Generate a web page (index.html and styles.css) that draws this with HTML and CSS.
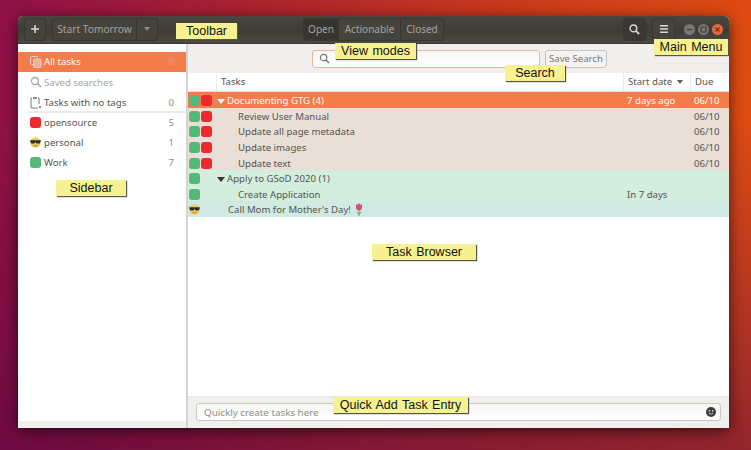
FILE: index.html
```html
<!DOCTYPE html>
<html lang="en">
    <head>
        <meta name="viewport" content="width=device-width">
        <title>Getting Things GNOME</title>
        <link rel="stylesheet" href="styles.css">
    </head>
    <body>
        <div class="window">
            <div class="titlebar">
                <button class="tool tool-add"><svg width="8" height="8" viewBox="0 0 9 9"><path d="M3.600 0h1.800v3.600H9v1.800H5.400V9H3.600V5.400H0V3.600h3.600z" fill="#d8d6d0"/></svg></button>
                <div class="group group-start">
                    <button class="tool tool-start">Start Tomorrow</button>
                    <button class="tool tool-drop"><span class="caret caret-dim"></span></button>
                </div>
                <div class="group group-modes">
                    <button class="tool mode mode-open active">Open</button>
                    <button class="tool mode mode-actionable">Actionable</button>
                    <button class="tool mode mode-closed">Closed</button>
                </div>
                <button class="tool tool-search">
                    <svg width="11" height="11" viewBox="0 0 12 12"><circle cx="4.800" cy="4.800" r="3.600" fill="none" stroke="#d8d6d0" stroke-width="1.600"/><path d="M7.500 7.500l3.600 3.600" stroke="#d8d6d0" stroke-width="2"/></svg>
                </button>
                <button class="tool tool-menu">
                    <svg width="8" height="8" viewBox="0 0 8 8"><path d="M0 0h8v1.600H0zM0 3.200h8v1.600H0zM0 6.400h8V8H0z" fill="#d8d6d0"/></svg>
                </button>
                <div class="wm">
                    <span class="wm-btn"><svg width="11" height="11" viewBox="0 0 11 11"><path d="M3 5h5v1.200H3z" fill="#3b3a35"/></svg></span>
                    <span class="wm-btn"><svg width="11" height="11" viewBox="0 0 11 11"><path d="M3 3h5v5H3z" fill="none" stroke="#3b3a35"/></svg></span>
                    <span class="wm-btn wm-close"><svg width="11" height="11" viewBox="0 0 11 11"><path d="M3.500 3.500l4 4M7.500 3.500l-4 4" stroke="#7a2c12" stroke-width="1.200"/></svg></span>
                </div>
            </div>

            <div class="content">
                <div class="sidebar">
                    <div class="side-list">
                        <div class="side-row selected">
                            <svg class="side-icon" width="12" height="12" viewBox="0 0 12 12"><rect x="0.500" y="0.500" width="7" height="8" rx="1" fill="none" stroke="#d9d5cf"/><rect x="3.500" y="3" width="7.500" height="8.500" rx="1" fill="#e9b49b" stroke="#d9d5cf"/></svg>
                            <span class="side-name">All tasks</span><span class="side-count">8</span>
                        </div>
                        <div class="side-row dim">
                            <svg class="side-icon" width="12" height="12" viewBox="0 0 12 12"><circle cx="5" cy="5" r="3.500" fill="none" stroke="#a5a5a5" stroke-width="1.300"/><path d="M7.600 7.600l3.400 3.400" stroke="#a5a5a5" stroke-width="1.600"/></svg>
                            <span class="side-name">Saved searches</span>
                        </div>
                        <div class="side-row">
                            <svg class="side-icon" width="12" height="13" viewBox="0 0 12 13"><path d="M2 2H1v10h7M8 2h1v6" fill="none" stroke="#777"/><path d="M3 1h4v2H3z" fill="#888"/><path d="M9 10l2 2M11 10l-2 2" stroke="#888"/></svg>
                            <span class="side-name">Tasks with no tags</span><span class="side-count">0</span>
                        </div>
                        <div class="side-sep"></div>
                        <div class="side-row">
                            <span class="tag tag-red"></span>
                            <span class="side-name">opensource</span><span class="side-count">5</span>
                        </div>
                        <div class="side-row">
                            <svg class="tag-emoji" width="11" height="11" viewBox="0 0 11 11"><circle cx="5.500" cy="5.500" r="5.300" fill="#f2cd5c"/><path d="M0.300 3.200h10.400v1.300l-1 2H6.500L5.500 4.800 4.500 6.500H1.300l-1-2z" fill="#2d2d2d"/><path d="M3.500 8.400q2 1 4 0" fill="none" stroke="#8a6a20" stroke-width=".7"/></svg>
                            <span class="side-name">personal</span><span class="side-count">1</span>
                        </div>
                        <div class="side-row">
                            <span class="tag tag-green"></span>
                            <span class="side-name">Work</span><span class="side-count">7</span>
                        </div>
                    </div>
                    <div class="side-foot"></div>
                </div>

                <div class="main">
                    <div class="searchbar">
                        <div class="search-entry">
                            <svg width="11" height="11" viewBox="0 0 12 12"><circle cx="5" cy="5" r="3.500" fill="none" stroke="#777" stroke-width="1.300"/><path d="M7.600 7.600l3.400 3.400" stroke="#777" stroke-width="1.600"/></svg>
                        </div>
                        <button class="save-search">Save Search</button>
                    </div>

                    <div class="head">
                        <div class="head-cell"></div>
                        <div class="head-cell">Tasks</div>
                        <div class="head-cell">Start date <span class="caret caret-head"></span></div>
                        <div class="head-cell">Due</div>
                    </div>

                    <div class="rows">
                        <div class="task task-orange">
                            <div class="tags"><span class="tag tag-green"></span><span class="tag tag-red"></span></div>
                            <div class="title"><span class="caret caret-white"></span>Documenting GTG (4)</div>
                            <div>7 days ago</div>
                            <div>06/10</div>
                        </div>
                        <div class="task task-tan">
                            <div class="tags"><span class="tag tag-green"></span><span class="tag tag-red"></span></div>
                            <div class="title child">Review User Manual</div>
                            <div></div>
                            <div>06/10</div>
                        </div>
                        <div class="task task-tan">
                            <div class="tags"><span class="tag tag-green"></span><span class="tag tag-red"></span></div>
                            <div class="title child">Update all page metadata</div>
                            <div></div>
                            <div>06/10</div>
                        </div>
                        <div class="task task-tan">
                            <div class="tags"><span class="tag tag-green"></span><span class="tag tag-red"></span></div>
                            <div class="title child">Update images</div>
                            <div></div>
                            <div>06/10</div>
                        </div>
                        <div class="task task-tan">
                            <div class="tags"><span class="tag tag-green"></span><span class="tag tag-red"></span></div>
                            <div class="title child">Update text</div>
                            <div></div>
                            <div>06/10</div>
                        </div>
                        <div class="task task-green">
                            <div class="tags"><span class="tag tag-green"></span></div>
                            <div class="title"><span class="caret caret-dark"></span>Apply to GSoD 2020 (1)</div>
                            <div></div>
                            <div></div>
                        </div>
                        <div class="task task-green">
                            <div class="tags"><span class="tag tag-green"></span></div>
                            <div class="title child">Create Application</div>
                            <div>In 7 days</div>
                            <div></div>
                        </div>
                        <div class="task task-teal">
                            <div class="tags">
                                <svg class="tag-emoji" width="11" height="11" viewBox="0 0 11 11"><circle cx="5.500" cy="5.500" r="5.300" fill="#f2cd5c"/><path d="M0.300 3.200h10.400v1.300l-1 2H6.500L5.500 4.800 4.500 6.500H1.300l-1-2z" fill="#2d2d2d"/><path d="M3.500 8.400q2 1 4 0" fill="none" stroke="#8a6a20" stroke-width=".7"/></svg>
                            </div>
                            <div class="title top">Call Mom for Mother's Day!
                                <svg class="rose" width="8" height="13" viewBox="0 0 8 13"><path d="M1 1l1.500 1L4 0l1.500 2L7 1v3.500C7 6.500 5.500 7.500 4 7.500S1 6.500 1 4.500z" fill="#d04f78"/><path d="M4 7v6M4 11L1.500 9M4 11l2.500-2" stroke="#6a9a5a" fill="none"/></svg>
                            </div>
                            <div></div>
                            <div></div>
                        </div>
                    </div>

                    <div class="quick">
                        <div class="quick-entry">
                            <span class="quick-hint">Quickly create tasks here</span>
                            <svg width="10" height="10" viewBox="0 0 10 10"><circle cx="5" cy="5" r="5" fill="#3c3c3c"/><circle cx="3.300" cy="3.800" r=".9" fill="#ddd"/><circle cx="6.700" cy="3.800" r=".9" fill="#ddd"/><path d="M2.800 6.300q2.200 1.600 4.400 0" fill="none" stroke="#ddd" stroke-width=".8"/></svg>
                        </div>
                    </div>
                </div>
            </div>
        </div>

        <!-- annotations on top of the screenshot -->
        <div class="note note-toolbar">Toolbar</div>
        <div class="note note-modes">View modes</div>
        <div class="note note-menu">Main Menu</div>
        <div class="note note-search">Search</div>
        <div class="note note-sidebar">Sidebar</div>
        <div class="note note-browser">Task Browser</div>
        <div class="note note-quick">Quick Add Task Entry</div>
    </body>
</html>
```

FILE: styles.css
```css
* {
    margin: 0;
    padding: 0;
    box-sizing: border-box;
}

html, body {
    height: 100%;
    overflow: hidden;
}

body {
    position: relative;
    padding: 16px 22px 22px 18px;
    font-family: "Noto Sans", sans-serif;
    font-size: 9.6px;
    color: #555550;
    background:
        linear-gradient(to bottom, transparent 25%, rgba(80, 0, 70, 0.55) 100%),
        linear-gradient(100deg, #8e1048 0%, #a8222f 30%, #c93a1c 62%, #e4500f 100%);
}

button {
    font: inherit;
    color: inherit;
    background: none;
    border: 0;
}

.window {
    display: flex;
    flex-direction: column;
    height: 412px;
    border-radius: 5px 5px 0 0;
    overflow: hidden;
    background: #fff;
    box-shadow: 0 3px 14px rgba(0, 0, 0, 0.65);
}

/* title bar */
.titlebar {
    display: flex;
    align-items: center;
    flex: 0 0 28px;
    padding: 0 6px 1px 6px;
    color: #a5a299;
    background: linear-gradient(#48463f, #3e3c37 55%, #4b4943);
    border-bottom: 1px solid #3a3833;
}

.tool {
    display: flex;
    align-items: center;
    justify-content: center;
    height: 23px;
    border: 1px solid #393732;
    border-radius: 3px;
    background: #45433d;
}

.tool-add {
    width: 22px;
    margin-right: 6px;
}

.group {
    display: flex;
}

.group .tool {
    border-radius: 0;
    margin-left: -1px;
}

.group .tool:first-child {
    border-radius: 3px 0 0 3px;
    margin-left: 0;
}

.group .tool:last-child {
    border-radius: 0 3px 3px 0;
}

.tool-start {
    width: 85px;
    font-size: 10.200px;
}

.tool-drop {
    width: 22px;
}

.group-modes {
    margin-left: 145px;
    margin-right: auto;
}

.mode {
    font-size: 10px;
}

.mode-open {
    width: 36px;
}

.mode-actionable {
    width: 63px;
}

.mode-closed {
    width: 44px;
}

.mode.active {
    background: #373530;
}

.tool-search {
    width: 23px;
    margin-right: 6px;
    background: #3a3834;
}

.tool-menu {
    width: 23px;
    margin-right: 9px;
}

.wm {
    display: flex;
    gap: 3px;
}

.wm-btn {
    display: flex;
    width: 11px;
    height: 11px;
    border-radius: 50%;
    background: #79776f;
}

.wm-close {
    background: #e9683a;
}

/* little triangles */
.caret {
    display: inline-block;
    width: 0;
    height: 0;
    border-left: 3.500px solid transparent;
    border-right: 3.500px solid transparent;
    border-top: 4px solid #8c8a82;
}

.caret-head {
    margin-left: 2px;
    vertical-align: 1px;
    border-top-color: #5c5c57;
}

.caret-white,
.caret-dark {
    margin-right: 2px;
    vertical-align: 0;
    border-left-width: 4.500px;
    border-right-width: 4.500px;
    border-top-width: 5px;
}

.caret-white {
    border-top-color: #fff;
}

.caret-dark {
    border-top-color: #333;
}

.content {
    display: flex;
    flex: 1;
    min-height: 0;
}

/* sidebar */
.sidebar {
    display: flex;
    flex-direction: column;
    flex: 0 0 170px;
    border-right: 2px solid #d5d3cf;
}

.side-list {
    flex: 1;
    padding-top: 8px;
}

.side-foot {
    flex: 0 0 7px;
    background: #f0efed;
}

.side-row {
    display: flex;
    align-items: center;
    height: 20px;
    padding: 0 12px;
}

.side-icon {
    flex: none;
    margin-right: 2px;
}

.side-row .tag,
.side-row .tag-emoji {
    margin-right: 3px;
}

.side-name {
    flex: 1;
}

.side-count {
    color: #8c8c88;
}

.selected {
    height: 19.500px;
    margin-bottom: 0.500px;
    color: #fff;
    background: #f47b4a;
}

.selected .side-count {
    color: #d99c80;
}

.dim {
    color: #a5a5a5;
}

.side-sep {
    height: 2px;
    margin: -1px 0 -1px 10px;
    background: #ecebe9;
}

/* tag squares */
.tag {
    display: block;
    flex: none;
    width: 11px;
    height: 11px;
    border-radius: 3px;
}

.tag-red {
    background: #ec2a2d;
}

.tag-green {
    background: #54b878;
}

.tag-emoji {
    display: block;
    flex: none;
}

/* main pane */
.main {
    display: flex;
    flex-direction: column;
    flex: 1;
    min-width: 0;
}

.searchbar {
    display: flex;
    align-items: center;
    flex: 0 0 29px;
    padding-left: 124px;
    background: #f0efed;
}

.search-entry {
    display: flex;
    align-items: center;
    width: 228px;
    height: 18px;
    padding-left: 6px;
    border: 1px solid #eeb49c;
    border-radius: 3px;
    background: linear-gradient(#f6f6f5, #fff);
}

.save-search {
    width: 62px;
    height: 18px;
    margin-left: 5px;
    border: 1px solid #c6c4c0;
    border-radius: 3px;
    color: #777773;
    background: #f4f3f1;
}

.head,
.task {
    display: grid;
    grid-template-columns: 28px 1fr 67px 39px;
    align-items: center;
}

.head {
    flex: 0 0 19px;
    border-bottom: 1px solid #e3e2df;
}

.head-cell {
    height: 100%;
    padding-left: 4px;
    line-height: 18px;
    border-left: 1px solid #ecebe8;
}

.head-cell:first-child {
    border-left: 0;
}

.rows {
    flex: 1;
}

.task {
    height: 15.625px;
    line-height: 16px;
    white-space: nowrap;
}

.task > div:nth-child(n+2) {
    padding-top: 1px;
}

.task > div:nth-child(n+3) {
    padding-left: 4px;
}

.tags {
    display: flex;
    gap: 1px;
    padding-left: 1px;
}

.title {
    padding-left: 1px;
}

.child {
    padding-left: 22px;
}

.top {
    padding-left: 12px;
}

.rose {
    margin-left: 2px;
    vertical-align: -3px;
}

.task-orange {
    color: #fff;
    background: #f47b4a;
}

.task-tan {
    background: #e9dfd6;
}

.task-green {
    background: #d3eedd;
}

.task-teal {
    background: #d0e9e2;
}

/* quick add */
.quick {
    flex: 0 0 32px;
    padding: 6px 8px 7px 8px;
    background: #f0efed;
    border-top: 1px solid #e8e7e4;
}

.quick-entry {
    display: flex;
    align-items: center;
    justify-content: space-between;
    height: 18px;
    padding: 0 4px 0 7px;
    border: 1px solid #c8c7c3;
    border-radius: 3px;
    background: linear-gradient(#f6f6f5, #fff);
}

.quick-hint {
    font-size: 9.800px;
    color: #8f8f8b;
}

/* yellow callouts */
.note {
    position: absolute;
    padding: 0 4px;
    height: 16px;
    font-family: "Liberation Sans", sans-serif;
    font-size: 12.500px;
    word-spacing: 1px;
    line-height: 16px;
    text-align: center;
    white-space: nowrap;
    color: #111;
    background: #f6f191;
    box-shadow: 1px 1px 1px #55554a;
}

.note-toolbar {
    left: 176px;
    top: 23px;
    width: 61px;
}

.note-modes {
    left: 335px;
    top: 43px;
    width: 81px;
}

.note-menu {
    left: 654px;
    top: 39px;
    width: 74px;
}

.note-search {
    left: 505px;
    top: 65px;
    width: 60px;
}

.note-sidebar {
    left: 56px;
    top: 180px;
    width: 70px;
}

.note-browser {
    left: 372px;
    top: 244px;
    width: 104px;
}

.note-quick {
    left: 333px;
    top: 397px;
    width: 135px;
}
```
